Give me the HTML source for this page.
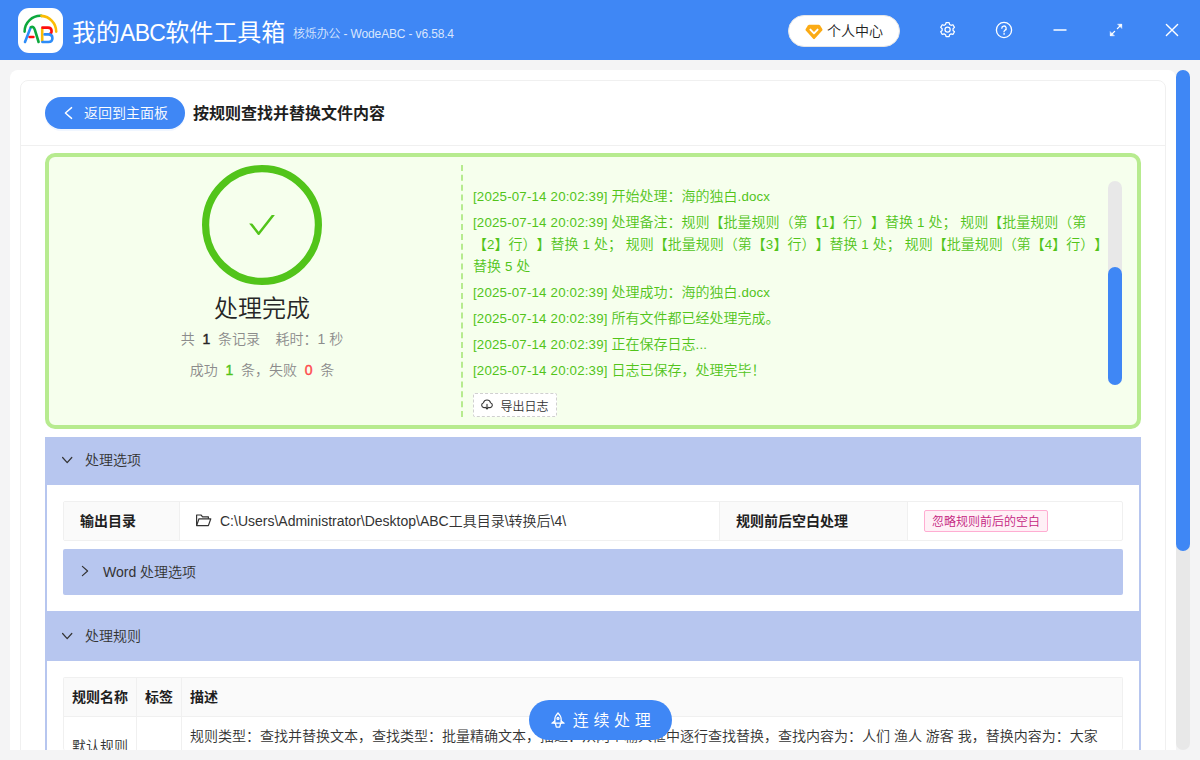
<!DOCTYPE html>
<html lang="zh-CN">
<head>
<meta charset="utf-8">
<title>我的ABC软件工具箱</title>
<style>
*{box-sizing:border-box;margin:0;padding:0}
html,body{width:1200px;height:760px;overflow:hidden}
body{background:#f4f4f5;font-family:"Liberation Sans","Noto Sans CJK SC",sans-serif;font-size:14px;color:#333;position:relative;font-weight:350}
.abs{position:absolute}
.hdr{position:absolute;left:0;top:0;width:1200px;height:60px;background:#3f87f5}
.logo{position:absolute;left:17.5px;top:7.5px;width:45px;height:45px;background:#fff;border-radius:11px}
.logo svg{position:absolute;left:0;top:0}
.apptitle{font-weight:400;position:absolute;left:72px;top:15px;height:36px;line-height:36px;font-size:24px;color:#fff;white-space:nowrap}
.appsub{position:absolute;left:293px;top:25px;height:18px;line-height:18px;font-size:12px;color:#d9e6fd;white-space:nowrap;letter-spacing:-.15px}
.pill{position:absolute;left:788px;top:15px;width:112px;height:32px;border-radius:16px;background:#fff;border:1px solid #e6e6e6}
.pill span{position:absolute;left:38px;top:0;height:30px;line-height:30px;font-size:14px;color:#222;white-space:nowrap}
.pill svg{position:absolute;left:16px;top:8px}
.hicon{position:absolute}
.panel{position:absolute;left:10px;top:70px;width:1166px;height:680px;background:#fff;border-radius:8px 8px 0 0;overflow:hidden}
.card{position:absolute;left:10px;top:10px;width:1146px;height:800px;border:1px solid #f0f0f0;border-radius:8px}
.cardhead{position:absolute;left:0;top:0;width:1144px;height:65px;border-bottom:1px solid #f0f0f0}
.backbtn{position:absolute;left:45px;top:97px;width:140px;height:32px;border-radius:16px;background:#3f87f5;color:#fff;box-shadow:0 2px 0 rgba(5,95,255,.06)}
.backbtn span{position:absolute;left:39px;top:0;line-height:32px;font-size:14px;white-space:nowrap}
.backbtn svg{position:absolute;left:17px;top:9px}
.pgtitle{position:absolute;left:193px;top:100px;height:28px;line-height:28px;font-size:16px;font-weight:700;color:#1f1f1f;white-space:nowrap}
.sbar{position:absolute;left:1176px;top:70px;width:14px;height:680px;border-radius:7px;background:#e8e8e8}
.sbar i{position:absolute;left:0;top:0;width:14px;height:481px;border-radius:7px;background:#3f87f5}
.okbox{position:absolute;left:45px;top:153px;width:1096px;height:276px;border:4px solid #b7eb8f;border-radius:10px;background:#f6ffed}
.ring{position:absolute;left:202px;top:165px;width:120px;height:120px;border-radius:50%;border:6px solid #52c41a}
.oktitle{position:absolute;left:62px;top:291px;width:400px;text-align:center;font-size:24px;line-height:36px;color:#262626}
.stat{position:absolute;left:62px;width:400px;text-align:center;font-size:14px;line-height:22px;color:#8c8c8c;white-space:pre}
.n{font-weight:400;-webkit-text-stroke:.45px currentColor}
.vdash{position:absolute;left:461px;top:165px;width:0;height:252px;border-left:2px dashed #b7eb8f}
.log{position:absolute;left:473px;top:181px;width:640px;color:#52c41a;font-size:14px;line-height:22px}
.log p{margin:4px 0;white-space:nowrap;text-spacing-trim:space-all}
.log p i{font-style:normal;font-size:13.3px;letter-spacing:.18px;line-height:1}
.isb{position:absolute;left:1108px;top:181px;width:14px;height:204px;border-radius:7px;background:#e8e8e8}
.isb i{position:absolute;left:0;top:86px;width:14px;height:118px;border-radius:7px;background:#3f87f5}
.expbtn{position:absolute;left:473px;top:393px;width:84px;height:24px;border:1px dashed #d0d0d0;border-radius:2px;background:#fff;font-size:12px;color:#333}
.expbtn span{position:absolute;left:26.5px;top:1.6px;line-height:22px;white-space:nowrap}
.expbtn svg{position:absolute;left:5.5px;top:3.8px}
.chead{position:absolute;left:45px;width:1096px;height:48px;background:#b7c6ef;color:#333}
.chead span{position:absolute;left:40px;top:-1.5px;line-height:48px;font-size:14px;white-space:nowrap}
.chead svg{position:absolute;left:16px;top:17px}
.cbody{position:absolute;left:45px;width:1096px;background:#fff;border-left:2px solid #b7c6ef;border-right:2px solid #b7c6ef}
.desc{position:absolute;left:63px;top:501px;width:1060px;height:40px;border:1px solid #f0f0f0;border-radius:2px;background:#fff}
.desc .lb{position:absolute;top:0;height:38px;background:#fafafa;border-right:1px solid #f0f0f0;font-weight:700;line-height:38px;padding-left:16px;color:#1f1f1f;white-space:nowrap}
.desc .ct{position:absolute;top:0;height:38px;line-height:38px;white-space:nowrap;color:#333}
.tag{position:absolute;left:924px;top:510px;width:124px;height:22px;border:1px solid #ffadd2;background:#fff0f6;color:#c41d7f;font-size:12px;line-height:22px;text-align:center;border-radius:2px;white-space:nowrap}
.sub{position:absolute;left:63px;top:549px;width:1060px;height:46px;background:#b7c6ef;border-radius:2px}
.sub span{position:absolute;left:40px;top:0;line-height:46px;font-size:14px;white-space:nowrap;color:#333}
.sub svg{position:absolute;left:16px;top:16px}
.tbl{position:absolute;left:63px;top:677px;width:1060px;height:120px;border:1px solid #f0f0f0;border-radius:2px;background:#fff}
.th{position:absolute;top:0;height:39px;background:#fafafa;border-right:1px solid #f0f0f0;border-bottom:1px solid #f0f0f0;font-weight:700;line-height:38px;padding-left:8px;color:#1f1f1f;white-space:nowrap}
.td{position:absolute;top:39px;height:80px;border-right:1px solid #f0f0f0;padding-left:8px;white-space:nowrap;color:#333}
.fab{position:absolute;left:528.5px;top:700px;width:143px;height:40px;border-radius:20px;background:#3f87f5;color:#fff}
.fab span{position:absolute;left:44.2px;top:1.1px;line-height:40px;font-size:16px;letter-spacing:4.7px;white-space:nowrap}
.fab svg{position:absolute;left:21.2px;top:11px}
</style>
</head>
<body>
<div class="hdr">
  <div class="logo">
    <svg style="left:-.5px;top:-.5px" width="46" height="46" viewBox="0 0 46 46" fill="none" stroke-linecap="round" stroke-linejoin="round">
      <path d="M7.6 24.6 A15.8 15.8 0 0 1 24.4 8.85" stroke="#0da83d" stroke-width="2.6"/>
      <path d="M24.4 8.85 A15.8 15.8 0 0 1 39.2 24.6" stroke="#fbbc05" stroke-width="2.6"/>
      <path d="M8 35 L13.6 20.6" stroke="#2d8cf8" stroke-width="2.6"/>
      <path d="M14 20.2 Q16.4 19 17.8 22.6 L21.6 35" stroke="#0da83d" stroke-width="2.6"/>
      <path d="M12.6 30 L16.4 30" stroke="#ff0d0d" stroke-width="2.6"/>
      <path d="M25.2 21 L25.2 35" stroke="#fbbc05" stroke-width="2.6" stroke-linecap="butt"/>
      <path d="M25.4 20.6 L31 20.6 Q34.6 20.6 34.6 24 Q34.6 26.4 32.6 27" stroke="#ff0d0d" stroke-width="2.6"/>
      <path d="M27.6 27.4 L31.4 27.4 Q35.4 27.4 35.4 31.2 Q35.4 35 31.4 35 L25.4 35" stroke="#2d8cf8" stroke-width="2.6"/>
    </svg>
  </div>
  <div class="apptitle">我的<span style="font-size:23px;letter-spacing:-.7px">ABC</span>软件工具箱</div>
  <div class="appsub">核烁办公 - WodeABC - v6.58.4</div>
  <div class="pill">
    <svg width="18" height="16" viewBox="0 0 18 16"><path d="M4.2 0.8 H13.8 Q14.6 0.8 15.1 1.5 L17.3 4.9 Q17.8 5.7 17.2 6.4 L9.8 14.8 Q9 15.6 8.2 14.8 L0.8 6.4 Q0.2 5.7 0.7 4.9 L2.9 1.5 Q3.4 0.8 4.2 0.8 Z" fill="#fbab15"/><path d="M5.4 5.6 L9 9.4 L12.6 5.6" fill="none" stroke="#fff" stroke-width="1.9" stroke-linecap="round" stroke-linejoin="round"/></svg>
    <span>个人中心</span>
  </div>
  <svg class="hicon" style="left:939.4px;top:21.2px" width="17.2" height="17.2" viewBox="0 0 18 18" fill="none" stroke="#fff" stroke-width="1.3" stroke-linejoin="round"><circle cx="9" cy="9" r="2.7"/><path d="M7.4 1.6 h3.2 l.5 2 1.5 .9 2 -.6 1.6 2.8 -1.5 1.4 v1.8 l1.5 1.4 -1.6 2.8 -2 -.6 -1.5 .9 -.5 2 h-3.2 l-.5 -2 -1.5 -.9 -2 .6 -1.6 -2.8 1.5 -1.4 v-1.8 l-1.5 -1.4 1.6 -2.8 2 .6 1.5 -.9 z"/></svg>
  <svg class="hicon" style="left:995px;top:21px" width="18" height="18" viewBox="0 0 18 18" fill="none" stroke="#fff" stroke-width="1.3" stroke-linecap="round"><circle cx="9" cy="9" r="7.6"/><path d="M6.8 7.2 a2.2 2.2 0 1 1 3.2 2 q-1 .6 -1 1.6"/><circle cx="9" cy="12.9" r=".5" fill="#fff" stroke-width=".6"/></svg>
  <svg class="hicon" style="left:1052px;top:21px" width="16" height="18" viewBox="0 0 16 18" stroke="#fff" stroke-opacity=".88" stroke-width="1.7"><path d="M1.500 9 H14.500"/></svg>
  <svg class="hicon" style="left:1109.3px;top:23.1px" width="14" height="14" viewBox="0 0 16 16" fill="none" stroke="#fff" stroke-width="1.5" stroke-linecap="round"><path d="M9.6 6.4 L14 2 M2 14 L6.4 9.6"/><path d="M10.2 1.4 H14.6 V5.8 Z M1.4 10.2 V14.6 H5.8 Z" fill="#fff" stroke-width=".6" stroke-linejoin="round"/></svg>
  <svg class="hicon" style="left:1164.3px;top:21px" width="16" height="18" viewBox="0 0 16 18" stroke="#fff" stroke-width="1.4" stroke-linecap="round"><path d="M2.4 3.4 L13.6 14.6 M13.6 3.4 L2.4 14.6"/></svg>
</div>

<div class="panel"><div class="card"><div class="cardhead"></div></div></div>
<div class="sbar"><i></i></div>

<div class="backbtn">
  <svg width="14" height="14" viewBox="0 0 14 14" fill="none" stroke="#fff" stroke-width="1.4" stroke-linecap="round" stroke-linejoin="round"><path d="M9.6 1.6 L3.4 7 L9.6 12.4"/></svg>
  <span>返回到主面板</span>
</div>
<div class="pgtitle">按规则查找并替换文件内容</div>

<div class="okbox"></div>
<svg class="abs" style="left:202px;top:165px" width="120" height="120" viewBox="0 0 100 100"><circle cx="50" cy="50" r="47" fill="none" stroke="#52c41a" stroke-width="6"/></svg>
<svg class="abs" style="left:246px;top:209px" width="32" height="32" viewBox="0 0 1024 1024"><path fill="#52c41a" d="M912 190h-69.900c-9.800 0-19.100 4.500-25.100 12.200L404.700 724.500 207 474a32 32 0 0 0-25.100-12.200H112c-6.700 0-10.400 7.700-6.300 12.900l273.900 347c12.800 16.200 37.400 16.200 50.300 0l488.400-618.900c4.100-5.100.4-12.800-6.300-12.800z"/></svg>
<div class="oktitle">处理完成</div>
<div class="stat" style="top:328px">共 <b class="n" style="color:#262626"> 1 </b> 条记录    耗时：1 秒</div>
<div class="stat" style="top:359px">成功 <b class="n" style="color:#52c41a"> 1 </b> 条，失败 <b class="n" style="color:#ff4d4f"> 0 </b> 条</div>
<div class="vdash"></div>
<div class="log">
  <p><i>[2025-07-14 20:02:39] </i>开始处理：海的独白<i>.docx</i></p>
  <p><i>[2025-07-14 20:02:39] </i>处理备注：规则【批量规则（第【<i>1</i>】行）】替换 <i>1</i> 处； 规则【批量规则（第<br>【<i>2</i>】行）】替换 <i>1</i> 处； 规则【批量规则（第【<i>3</i>】行）】替换 <i>1</i> 处； 规则【批量规则（第【<i>4</i>】行）】<br>替换 <i>5</i> 处</p>
  <p><i>[2025-07-14 20:02:39] </i>处理成功：海的独白<i>.docx</i></p>
  <p><i>[2025-07-14 20:02:39] </i>所有文件都已经处理完成。</p>
  <p><i>[2025-07-14 20:02:39] </i>正在保存日志<i>...</i></p>
  <p><i>[2025-07-14 20:02:39] </i>日志已保存，处理完毕！</p>
</div>
<div class="isb"><i></i></div>
<div class="expbtn">
  <svg width="14" height="14" viewBox="0 0 14 14" fill="none" stroke="#333" stroke-width="1.1" stroke-linecap="round" stroke-linejoin="round"><path d="M4.6 9.6 H3.9 A2.5 2.5 0 0 1 3.5 4.7 A3.6 3.6 0 0 1 10.5 4.7 A2.5 2.5 0 0 1 10.1 9.6 H9.4"/><path d="M7 6.2 V10.8 M5.4 9.4 L7 11 L8.6 9.4"/></svg>
  <span>导出日志</span>
</div>

<div class="chead" style="top:437px">
  <svg width="12" height="12" viewBox="0 0 12 12" fill="none" stroke="#333" stroke-width="1.2" stroke-linecap="round" stroke-linejoin="round"><path d="M1.6 3.5 L6.2 8.7 L10.8 3.5"/></svg>
  <span>处理选项</span>
</div>
<div class="cbody" style="top:485px;height:126px"></div>
<div class="desc">
  <div class="lb" style="left:0;width:116px">输出目录</div>
  <div class="ct" style="left:116px;width:540px">
    <svg class="abs" style="left:15px;top:11px" width="17" height="15" viewBox="0 0 17 15" fill="none" stroke="#333" stroke-width="1.2" stroke-linejoin="round"><path d="M1.6 12.6 V2 H6 L7.6 3.8 H13.4 V5.8"/><path d="M1.6 12.6 L4 5.8 H15.8 L13.4 12.6 Z"/></svg>
    <span class="abs" style="left:40px;top:0">C:\Users\Administrator\Desktop\ABC工具目录\转换后\4\</span>
  </div>
  <div class="lb" style="left:655px;width:189px;border-left:1px solid #f0f0f0">规则前后空白处理</div>
</div>
<div class="tag">忽略规则前后的空白</div>
<div class="sub">
  <svg width="12" height="12" viewBox="0 0 12 12" fill="none" stroke="#333" stroke-width="1.2" stroke-linecap="round" stroke-linejoin="round"><path d="M3.4 1.4 L8.6 6 L3.4 10.6"/></svg>
  <span>Word 处理选项</span>
</div>

<div class="chead" style="top:611px;height:50px;border-top:2px solid #b7c6ef">
  <svg width="12" height="12" viewBox="0 0 12 12" fill="none" stroke="#333" stroke-width="1.2" stroke-linecap="round" stroke-linejoin="round"><path d="M1.6 3.5 L6.2 8.7 L10.8 3.5"/></svg>
  <span>处理规则</span>
</div>
<div class="cbody" style="top:661px;height:89px"></div>
<div class="tbl" style="height:73px;border-bottom:0">
  <div class="th" style="left:0;width:73px">规则名称</div>
  <div class="th" style="left:73px;width:45px">标签</div>
  <div class="th" style="left:118px;width:940px;border-right:0">描述</div>
  <div class="td" style="left:0;width:73px;line-height:59px">默认规则</div>
  <div class="td" style="left:73px;width:45px"></div>
  <div class="td" style="left:118px;width:940px;border-right:0;line-height:38.6px">规则类型：查找并替换文本，查找类型：批量精确文本，描述：从两个输入框中逐行查找替换，查找内容为：人们 渔人 游客 我，替换内容为：大家</div>
</div>

<div class="fab">
  <svg width="16" height="18" viewBox="0 0 16 18" fill="none" stroke="#fff" stroke-width="1.25" stroke-linecap="round" stroke-linejoin="round"><path d="M8 2 C5.6 4.2 4.8 6.6 4.8 9 V12.2 M8 2 C10.400 4.200 11.200 6.600 11.200 9 V12.2"/><path d="M4.800 10 L1.900 12.200 H14.100 L11.200 10"/><path d="M5.400 12.400 L6.300 16.200 H9.700 L10.600 12.400"/><circle cx="8" cy="7.400" r="1"/></svg>
  <span>连续处理</span>
</div>
<div class="abs" style="left:0;top:750px;width:1200px;height:10px;background:#f4f4f5"></div>
</body>
</html>
